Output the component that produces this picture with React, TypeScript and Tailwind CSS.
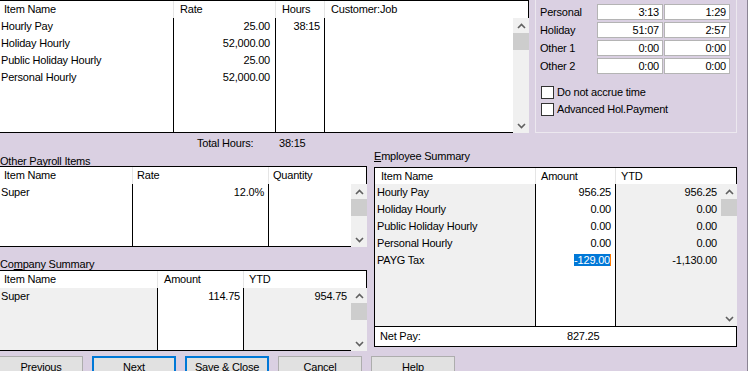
import React from 'react'

function Chevron({ up }: { up?: boolean }) {
  return (
    <svg width="9" height="6" viewBox="0 0 9 6">
      <path
        d={up ? 'M1 5 L4.5 1.5 L8 5' : 'M1 1 L4.5 4.5 L8 1'}
        fill="none"
        stroke="#606060"
        strokeWidth="1.6"
      />
    </svg>
  )
}

function ScrollBar() {
  return (
    <div className="flex w-[16px] flex-col bg-[#f0f0f0]">
      <div className="flex h-[15px] items-center justify-center">
        <Chevron up />
      </div>
      <div className="h-[17px] bg-[#cdcdcd]" />
      <div className="flex-1" />
      <div className="flex h-[15px] items-center justify-center">
        <Chevron />
      </div>
    </div>
  )
}

function Rows({ items, className = '' }: { items: React.ReactNode[]; className?: string }) {
  return (
    <>
      {items.map((it, i) => (
        <div key={i} className={`h-[17px] whitespace-nowrap leading-[17px] ${className}`}>
          {it}
        </div>
      ))}
    </>
  )
}

function TimeBox({ value }: { value: string }) {
  return (
    <div className="h-[16px] w-[66px] border border-[#b4b4b4] bg-white pr-[3px] text-right leading-[14px]">
      {value}
    </div>
  )
}

function Checkbox({ label }: { label: string }) {
  return (
    <div className="flex h-[17px] items-center gap-[3px]">
      <div className="ml-[1px] h-[13px] w-[13px] border border-[#333333] bg-white" />
      <span>{label}</span>
    </div>
  )
}

function Button({ label, focused }: { label: string; focused?: boolean }) {
  return (
    <div
      className={`flex h-[23px] w-[84px] items-center justify-center bg-[#e1e1e1] ${
        focused ? 'border-2 border-[#0078d7]' : 'border border-[#adadad]'
      }`}
    >
      {label}
    </div>
  )
}

export default function App() {
  const leave = [
    ['Personal', '3:13', '1:29'],
    ['Holiday', '51:07', '2:57'],
    ['Other 1', '0:00', '0:00'],
    ['Other 2', '0:00', '0:00'],
  ]

  return (
    <div className="h-[371px] w-[748px] overflow-hidden border-r border-[#8b8494] bg-[#dad0e2] font-['Liberation_Sans',Arial,sans-serif] text-[11px] tracking-[-0.2px] text-black">
      {/* top: pay items + leave balances */}
      <div className="flex h-[133px]">
        <div className="flex w-[529px] flex-col">
          <div className="flex h-[18px] border-t border-r border-black bg-white leading-[17px]">
            <div className="w-[174px] border-r border-[#e5e5e5] pl-[4px]">Item Name</div>
            <div className="w-[102px] border-r border-[#e5e5e5] pl-[6px]">Rate</div>
            <div className="w-[49px] border-r border-[#e5e5e5] pl-[6px]">Hours</div>
            <div className="flex-1 pl-[6px]">Customer:Job</div>
          </div>
          <div className="flex h-[115px]">
            <div className="flex flex-1 border-b border-black bg-white">
              <div className="w-[174px] border-r border-black pl-[1px]">
                <Rows items={['Hourly Pay', 'Holiday Hourly', 'Public Holiday Hourly', 'Personal Hourly']} />
              </div>
              <div className="w-[102px] border-r border-black pr-[5px] text-right">
                <Rows items={['25.00', '52,000.00', '25.00', '52,000.00']} />
              </div>
              <div className="w-[49px] border-r border-black pr-[4px] text-right">
                <Rows items={['38:15']} />
              </div>
              <div className="flex-1" />
            </div>
            <ScrollBar />
          </div>
        </div>

        <div className="ml-[6px] flex w-[202px] flex-col border-r border-b border-l border-[#ece8ef] pt-[4px] pl-[4px]">
          <div className="flex flex-col gap-[2px]">
            {leave.map(([name, a, b]) => (
              <div key={name} className="flex h-[16px] items-center">
                <div className="w-[57px]">{name}</div>
                <TimeBox value={a} />
                <div className="w-[1px]" />
                <TimeBox value={b} />
              </div>
            ))}
          </div>
          <div className="mt-[10px] flex flex-col">
            <Checkbox label="Do not accrue time" />
            <Checkbox label="Advanced Hol.Payment" />
          </div>
        </div>
      </div>

      {/* middle: other items, company and employee summaries */}
      <div className="flex h-[218px]">
        <div className="flex w-[367px] flex-col">
          <div className="flex h-[19px] pt-[3px] pl-[197px] leading-[15px]">
            <span className="w-[82px]">Total Hours:</span>
            <span>38:15</span>
          </div>
          <div className="h-[14px] leading-[18px]">Other Payroll Items</div>
          <div className="flex flex-col">
            <div className="flex h-[18px] border-t border-r border-black bg-white leading-[17px]">
              <div className="w-[133px] border-r border-[#e5e5e5] pl-[4px]">Item Name</div>
              <div className="w-[136px] border-r border-[#e5e5e5] pl-[4px]">Rate</div>
              <div className="flex-1 pl-[4px]">Quantity</div>
            </div>
            <div className="flex h-[63px]">
              <div className="flex flex-1 border-b border-black bg-white">
                <div className="w-[133px] border-r border-black pl-[1px]">
                  <Rows items={['Super']} />
                </div>
                <div className="w-[136px] border-r border-black pr-[4px] text-right">
                  <Rows items={['12.0%']} />
                </div>
                <div className="flex-1" />
              </div>
              <ScrollBar />
            </div>
          </div>
          <div className="h-[23px] pt-[8px] leading-[18px]">
            Co<span className="underline">m</span>pany Summary
          </div>
          <div className="flex flex-col">
            <div className="flex h-[18px] border-t border-r border-black bg-white leading-[17px]">
              <div className="w-[158px] border-r border-[#e5e5e5] pl-[4px]">Item Name</div>
              <div className="w-[86px] border-r border-[#e5e5e5] pl-[6px]">Amount</div>
              <div className="flex-1 pl-[5px]">YTD</div>
            </div>
            <div className="flex h-[63px]">
              <div className="flex flex-1 border-b border-black">
                <div className="w-[158px] border-r border-black bg-[#f0f0f0] pl-[1px]">
                  <Rows items={['Super']} />
                </div>
                <div className="w-[86px] border-r border-black bg-white pr-[3px] text-right">
                  <Rows items={['114.75']} />
                </div>
                <div className="flex-1 bg-[#f0f0f0] pr-[4px] text-right">
                  <Rows items={['954.75']} />
                </div>
              </div>
              <ScrollBar />
            </div>
          </div>
        </div>

        <div className="flex flex-col pl-[7px]">
          <div className="h-[34px] pt-[14px] leading-[18px]">
            <span className="underline">E</span>mployee Summary
          </div>
          <div className="flex w-[363px] flex-col">
            <div className="flex h-[17px] border-t border-r border-l border-black bg-white leading-[16px]">
              <div className="w-[161px] border-r border-[#e5e5e5] pl-[6px]">Item Name</div>
              <div className="w-[80px] border-r border-[#e5e5e5] pl-[5px]">Amount</div>
              <div className="flex-1 pl-[5px]">YTD</div>
            </div>
            <div className="flex h-[142px]">
              <div className="flex flex-1 border-l border-black">
                <div className="w-[161px] border-r border-black bg-[#f0f0f0] pl-[2px]">
                  <Rows
                    items={['Hourly Pay', 'Holiday Hourly', 'Public Holiday Hourly', 'Personal Hourly', 'PAYG Tax']}
                  />
                </div>
                <div className="w-[80px] border-r border-black bg-white pr-[4px] text-right">
                  <Rows
                    items={[
                      '956.25',
                      '0.00',
                      '0.00',
                      '0.00',
                      <span className="border-r border-[#ff7a00] bg-[#0078d7] text-white">-129.00</span>,
                    ]}
                  />
                </div>
                <div className="flex-1 bg-[#f0f0f0] pr-[4px] text-right">
                  <Rows items={['956.25', '0.00', '0.00', '0.00', '-1,130.00']} />
                </div>
              </div>
              <ScrollBar />
            </div>
            <div className="flex h-[21px] border border-black bg-white leading-[19px]">
              <div className="w-[192px] pl-[5px]">Net Pay:</div>
              <div>827.25</div>
            </div>
          </div>
        </div>
      </div>

      {/* buttons */}
      <div className="mt-[5px] ml-[-1px] flex gap-[9px]">
        <Button label="Previous" />
        <Button label="Next" focused />
        <Button label="Save &amp; Close" focused />
        <Button label="Cancel" />
        <Button label="Help" />
      </div>
    </div>
  )
}
